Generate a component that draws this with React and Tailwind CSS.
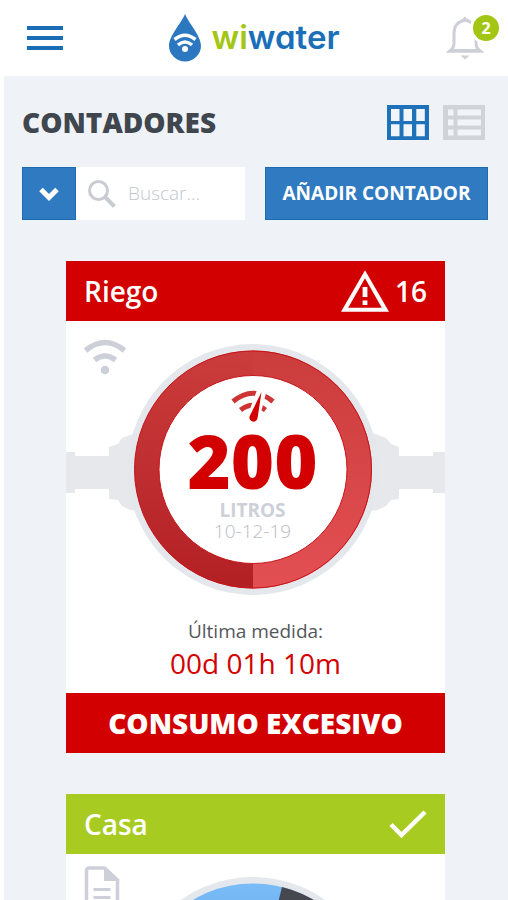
import React from "react";

const MenuIcon = () => (
  <svg className="w-9 h-6" viewBox="0 0 36 24" fill="#1a6cb4">
    <path d="M0 0h36v4H0zM0 10h36v4H0zM0 20h36v4H0z" />
  </svg>
);

const DropIcon = () => (
  <svg className="w-8 h-12" viewBox="0 0 32 48">
    <path d="M16 0C19 8 32 22 32 31.500a16 16 0 0 1-32 0C0 22 13 8 16 0z" fill="#2b78c0" />
    <g fill="none" stroke="#fff" strokeWidth="3.600">
      <path d="M5.500 25.500q10.500-8.500 21 0" />
      <path d="M9 31q7-6 14 0" />
    </g>
    <circle cx="16" cy="35" r="3" fill="#fff" />
  </svg>
);

const BellIcon = () => (
  <svg className="w-10 h-11" viewBox="0 0 40 44">
    <path
      d="M19 4C12 5.500 8 10.500 8 17.500V27c0 3.500-1.500 6-4 8h30c-2.500-2-4-4.500-4-8v-9.500C30 10.500 26 5.500 19 4z"
      fill="none"
      stroke="#cdd0d8"
      strokeWidth="3"
    />
    <path d="M14 5.500 19 .5l5 5zM0 36.500 4.500 33h29l4.500 3.500zM14.500 39.500h9l-4.500 4z" fill="#cdd0d8" />
  </svg>
);

const GridIcon = () => (
  <svg className="w-[42px] h-[35px]" viewBox="0 0 42 35">
    <path d="M0 0h42v35H0z" fill="#1f72ba" />
    <path
      d="M4 4h8.500v12H4zM16.500 4H25v12h-8.500zM29.300 4h8.500v12h-8.500zM4 19.300h8.500v12H4zM16.500 19.300H25v12h-8.500zM29.300 19.300h8.500v12h-8.500z"
      fill="#f1f5fa"
    />
  </svg>
);

const ListIcon = () => (
  <svg className="w-[42px] h-[35px]" viewBox="0 0 42 35">
    <path d="M0 0h42v35H0z" fill="#d0d3d8" />
    <path
      d="M5 4.500h5.500v6H5zM14.500 4.500H38v6H14.500zM5 14.500h5.500v6H5zM14.500 14.500H38v6H14.500zM5 24.500h5.500v6H5zM14.500 24.500H38v6H14.500z"
      fill="#f1f5fa"
    />
  </svg>
);

const WarningIcon = () => (
  <svg className="w-12 h-[42px]" viewBox="1 2 22 19" fill="#fff">
    <path d="M12 5.700 19.700 19.200H4.300L12 5.700M12 2 1 21h22L12 2zm1.100 13.900h-2.200v2h2.200v-2zm0-6.200h-2.200v4.600h2.200V9.700z" />
  </svg>
);

const CheckIcon = () => (
  <svg className="w-[38px] h-7" viewBox="0 0 38 28">
    <path d="M2 14.500 12.500 25 36 2" fill="none" stroke="#fff" strokeWidth="4.500" />
  </svg>
);

const WifiIcon = () => (
  <svg className="w-[42px] h-9" viewBox="0 0 42 36">
    <g fill="none" stroke="#cdd0d8" strokeWidth="5.500">
      <path d="M1.500 11.500Q21-4.500 40.500 11.500" />
      <path d="M10.500 21q10.500-8 21 0" />
    </g>
    <circle cx="21" cy="31" r="4.300" fill="#cdd0d8" />
  </svg>
);

const DocIcon = () => (
  <svg className="w-9 h-11" viewBox="0 0 36 44">
    <path
      d="M20.500 2H5a2.500 2.500 0 0 0-2.500 2.500v35A2.500 2.500 0 0 0 5 42h26a2.500 2.500 0 0 0 2.500-2.500V14z"
      fill="none"
      stroke="#cdd0d8"
      strokeWidth="3.500"
    />
    <path d="M20 1v14h15zM9.500 22h17v3h-17zM9.500 30h17v3h-17z" fill="#cdd0d8" />
  </svg>
);

const LeakIcon = () => (
  <svg className="w-11 h-8" viewBox="0 0 44 32">
    <g fill="none" stroke="#cf3434" strokeWidth="5">
      <path d="M2 11.500Q22-5 42 11.500" />
      <path d="M9.500 20q12.500-9.500 25 0" />
    </g>
    <path d="M26 0 16 27l12 3 7-27z" fill="#fff" />
    <path d="M30.500 2 18.500 26.500a4 4 0 1 0 8 2z" fill="#d20000" />
  </svg>
);

const Pipes = () => (
  <path
    d="M0 131h9v4h34v-9l9-3 4-6 8-3 10-3h229l9 3 8 3 5 6 8 3v9h34v-4h12v41h-12v-4h-34v10l-8 1-5 6-8 4-9 1H74l-10-1-8-4-4-6-9-1v-10H9v4H0z"
    fill="#e7e8ec"
  />
);

const AlertDial = () => (
  <svg className="block w-full" viewBox="0 0 379 280">
    <defs>
      <linearGradient id="ringLeft" x1="0" y1="1" x2="0" y2="0">
        <stop offset="0" stopColor="#b32024" />
        <stop offset="1" stopColor="#cb3c3c" />
      </linearGradient>
      <linearGradient id="ringRight" x1="0" y1="0" x2="0" y2="1">
        <stop offset="0" stopColor="#cb3c3c" />
        <stop offset="1" stopColor="#e35053" />
      </linearGradient>
    </defs>
    <Pipes />
    <circle cx="187" cy="148.500" r="125.500" fill="#e4e7eb" />
    <path d="M187.500 29.500a119 119 0 0 0 0 238z" fill="url(#ringLeft)" />
    <path d="M187 29.500a119 119 0 0 1 0 238z" fill="url(#ringRight)" />
    <circle cx="187" cy="148.500" r="118.500" fill="none" stroke="#c8141a" strokeWidth="1" />
    <circle cx="187" cy="148.500" r="94" fill="#fff" stroke="#c8141a" strokeWidth="1" />
  </svg>
);

const NormalDial = () => (
  <svg className="block w-full" viewBox="0 0 379 280">
    <defs>
      <linearGradient id="ringBlue" x1="0" y1="1" x2="0" y2="0">
        <stop offset="0" stopColor="#2f7ac1" />
        <stop offset="1" stopColor="#7abcf8" />
      </linearGradient>
    </defs>
    <Pipes />
    <circle cx="187" cy="148.500" r="125.500" fill="#e4e7eb" />
    <circle cx="187" cy="148.500" r="119" fill="url(#ringBlue)" />
    <path d="M187 148.500 216 33a119 119 0 0 1-29 234.500z" fill="#45484f" />
    <circle cx="187" cy="148.500" r="94" fill="#fff" />
  </svg>
);

const meters = [
  {
    name: "Riego",
    alerts: 16,
    reading: { value: "200", date: "10-12-19", last: "00d 01h 10m" },
    status: "CONSUMO EXCESIVO",
  },
  { name: "Casa", alerts: 0 },
];

const MeterCard = ({ meter }) => {
  const { name, alerts, reading, status } = meter;
  const alert = alerts > 0;
  const bar = alert ? "bg-[#d20000]" : "bg-[#a8cb22]";

  return (
    <article className="bg-white">
      <header className={`h-[60px] px-[18px] flex items-center justify-between text-white ${bar}`}>
        <h2 className="text-[28px] font-semibold">{name}</h2>
        {alert ? (
          <div className="flex items-center gap-[6px]">
            <WarningIcon />
            <span className="text-[28px] font-semibold">{alerts}</span>
          </div>
        ) : (
          <CheckIcon />
        )}
      </header>

      {/* Dial with the reading on top of it */}
      <div className="relative">
        {alert ? <AlertDial /> : <NormalDial />}
        <div className={`absolute left-[18px] ${alert ? "top-[18px]" : "top-3"}`}>
          {alert ? <WifiIcon /> : <DocIcon />}
        </div>
        {reading && (
          <div className="absolute inset-0 pt-[69px] pr-[6px] flex flex-col items-center">
            <LeakIcon />
            <p className="mt-1 text-[74px] leading-[70px] font-extrabold text-[#d20000]">{reading.value}</p>
            <p className="mt-1 text-[19px] leading-[21px] font-bold text-[#cdd0d8]">LITROS</p>
            <p className="text-[19px] leading-[21px] font-light text-[#b9bdc6]">{reading.date}</p>
          </div>
        )}
      </div>

      {reading && (
        <div className="pt-4 pb-3 text-center">
          <p className="text-[19px] leading-7 text-[#53575c]">Última medida:</p>
          <p className="text-[28px] leading-9 text-[#d20000]">{reading.last}</p>
        </div>
      )}

      {status && (
        <footer className={`h-[60px] flex items-center justify-center text-[28px] font-extrabold text-white ${bar}`}>
          {status}
        </footer>
      )}
    </article>
  );
};

const App = () => {
  return (
    <div className="bg-white font-['Open_Sans','Noto_Sans',sans-serif]">
      {/* Topbar */}
      <header className="h-[76px] pl-[27px] pr-[22px] flex items-center justify-between">
        <button type="button" aria-label="Menú">
          <MenuIcon />
        </button>
        <a href="#" aria-label="wiwater" className="flex items-center gap-[10px]">
          <DropIcon />
          <span className="text-[33px] font-semibold text-[#1a6fb8] font-['Inter',sans-serif] [font-feature-settings:'cv11']">
            <span className="text-[#a3c614]">wi</span>water
          </span>
        </a>
        <button type="button" aria-label="Notificaciones" className="relative">
          <BellIcon />
          <span className="absolute -top-1 -right-4 w-8 h-8 rounded-full border-[3px] border-white bg-[#a3c614] text-white text-base font-bold flex items-center justify-center">
            2
          </span>
        </button>
      </header>

      <main className="ml-1 pl-[18px] pr-5 pt-7 pb-10 bg-[#eff3f8]">
        <div className="flex items-center justify-between">
          <h1 className="text-[28px] leading-9 font-extrabold text-[#3f464d]">CONTADORES</h1>
          <div className="flex gap-[14px] pr-[3px]">
            <button type="button" aria-label="Cuadrícula">
              <GridIcon />
            </button>
            <button type="button" aria-label="Lista">
              <ListIcon />
            </button>
          </div>
        </div>

        {/* Filter, search and add */}
        <div className="mt-[27px] flex gap-5">
          <div className="flex flex-1 min-w-0 h-[53px] bg-white">
            <button
              type="button"
              aria-label="Filtrar"
              className="w-[54px] shrink-0 flex items-center justify-center bg-[#2f7ac1] border border-[#1a6cb4]"
            >
              <svg className="w-5 h-4" viewBox="0 0 20 16">
                <path d="m2 3.500 8 8 8-8" fill="none" stroke="#fff" strokeWidth="5" />
              </svg>
            </button>
            <label className="flex flex-1 min-w-0 items-center pl-3 gap-3">
              <svg className="w-7 h-7 shrink-0" viewBox="0 0 28 28" fill="none" stroke="#c9ccd2">
                <circle cx="10.500" cy="10.500" r="9" strokeWidth="3" />
                <path d="m17 17 9.500 9.500" strokeWidth="4" />
              </svg>
              <input
                type="text"
                aria-label="Buscar"
                placeholder="Buscar..."
                className="w-full min-w-0 text-[19px] font-light outline-none placeholder:text-[#c3c7cd]"
              />
            </label>
          </div>
          <button
            type="button"
            className="w-[223px] h-[53px] shrink-0 bg-[#2f7ac1] border border-[#1a6cb4] text-white text-[19px] font-bold"
          >
            AÑADIR CONTADOR
          </button>
        </div>

        <section className="mt-[41px] pl-11 pr-[43px] flex flex-col gap-[41px]">
          {meters.map((meter) => (
            <MeterCard key={meter.name} meter={meter} />
          ))}
        </section>
      </main>
    </div>
  );
};

export default App;
